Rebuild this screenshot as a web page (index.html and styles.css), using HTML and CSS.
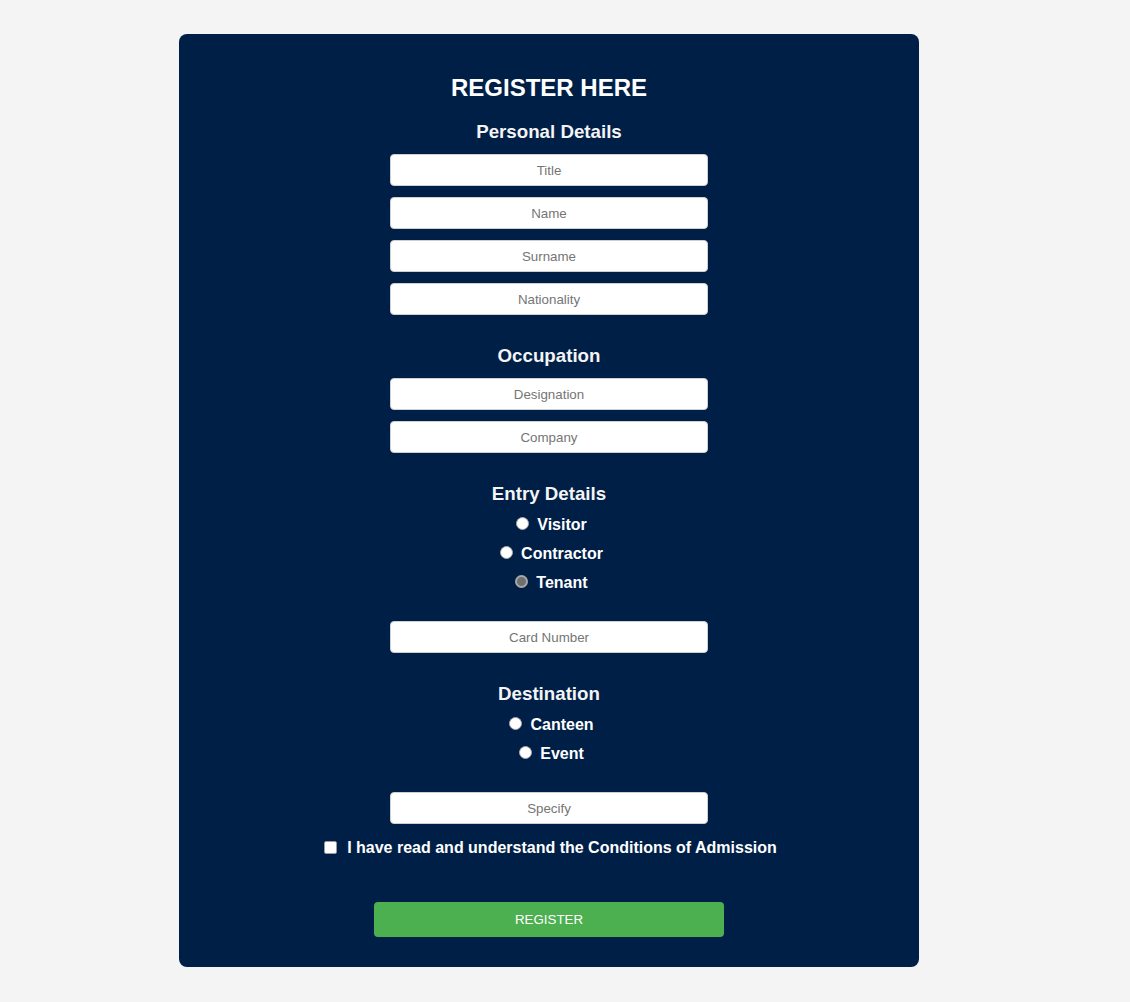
FILE: index.html
```html
<!DOCTYPE html>
<html lang="en">
<head>
<meta charset="utf-8">
<title>Register</title>
<link rel="stylesheet" href="styles.css">
</head>
<body>
<div class="page">
  <form class="card">
    <h1 class="title">REGISTER HERE</h1>

    <h3 class="section first">Personal Details</h3>
    <div class="fields">
      <input class="field" type="text" placeholder="Title">
      <input class="field" type="text" placeholder="Name">
      <input class="field" type="text" placeholder="Surname">
      <input class="field" type="text" placeholder="Nationality">
    </div>

    <h3 class="section">Occupation</h3>
    <div class="fields">
      <input class="field" type="text" placeholder="Designation">
      <input class="field" type="text" placeholder="Company">
    </div>

    <h3 class="section radio-head">Entry Details</h3>
    <div class="radios">
      <label class="radio-row"><input class="radio" type="radio" name="entry"><span class="radio-text">Visitor</span></label>
      <label class="radio-row"><input class="radio" type="radio" name="entry"><span class="radio-text">Contractor</span></label>
      <label class="radio-row"><input class="radio hover" type="radio" name="entry"><span class="radio-text">Tenant</span></label>
    </div>
    <input class="field after-radios" type="text" placeholder="Card Number">

    <h3 class="section radio-head">Destination</h3>
    <div class="radios">
      <label class="radio-row"><input class="radio" type="radio" name="dest"><span class="radio-text">Canteen</span></label>
      <label class="radio-row"><input class="radio" type="radio" name="dest"><span class="radio-text">Event</span></label>
    </div>
    <input class="field after-radios" type="text" placeholder="Specify">

    <label class="agree"><input class="check" type="checkbox"><span class="agree-text">I have read and understand the Conditions of Admission</span></label>

    <button class="submit" type="button">REGISTER</button>
  </form>
</div>
</body>
</html>
```

FILE: styles.css
```css
html, body {
  margin: 0;
  padding: 0;
  background: #f4f4f4;
  font-family: "Liberation Sans", Arial, sans-serif;
}

.page {
  display: flex;
  padding: 34px 0 35px 179px;
}

.card {
  width: 740px;
  box-sizing: border-box;
  background: #001f47;
  border-radius: 8px;
  padding: 40px 0 30px;
  display: flex;
  flex-direction: column;
  align-items: center;
  margin: 0;
}

.title {
  margin: 0;
  font-size: 24px;
  line-height: 28px;
  font-weight: bold;
  color: #ffffff;
}

.section {
  margin: 30px 0 11px;
  font-size: 18.72px;
  line-height: 22px;
  font-weight: bold;
  color: #f4f4f4;
}

.section.first {
  margin-top: 19px;
}

.section.radio-head {
  margin-bottom: 5px;
}

.fields {
  display: flex;
  flex-direction: column;
  gap: 11px;
}

.field {
  display: block;
  width: 318px;
  height: 32px;
  box-sizing: border-box;
  border: 1px solid #cfcfcf;
  border-radius: 4px;
  background: #ffffff;
  text-align: center;
  font-family: "Liberation Sans", Arial, sans-serif;
  font-size: 13.33px;
  color: #222;
  padding: 0 8px;
  margin: 0;
}

.field::placeholder {
  color: #757575;
}

.field.after-radios {
  margin-top: 24px;
}

.radios {
  display: flex;
  flex-direction: column;
  align-items: center;
}

.radio-row {
  display: flex;
  align-items: center;
  justify-content: center;
  height: 29px;
  color: #ffffff;
  font-size: 16px;
  font-weight: bold;
}

.radio {
  appearance: none;
  -webkit-appearance: none;
  width: 13px;
  height: 13px;
  box-sizing: border-box;
  margin: 0 3px 0 5px;
  border: 1px solid #a8a8a8;
  border-radius: 50%;
  background: #ffffff;
  position: relative;
  top: -1px;
}

.radio.hover {
  border: 2px solid #a8a8a8;
  background: #6f6f6f;
}

.radio-text {
  margin-left: 5px;
}

.agree {
  display: flex;
  align-items: center;
  justify-content: center;
  height: 20px;
  margin-top: 14px;
  color: #ffffff;
  font-size: 16px;
  font-weight: bold;
}

.check {
  appearance: none;
  -webkit-appearance: none;
  width: 13px;
  height: 13px;
  box-sizing: border-box;
  margin: 0 3px 0 3px;
  border: 1px solid #9a9a9a;
  border-radius: 2px;
  background: #ffffff;
  position: relative;
  top: -1px;
}

.agree-text {
  margin-left: 7px;
}

.submit {
  margin-top: 44px;
  width: 350px;
  height: 35px;
  border: none;
  border-radius: 4px;
  background: #4caf50;
  color: #ffffff;
  font-family: "Liberation Sans", Arial, sans-serif;
  font-size: 13.33px;
  cursor: pointer;
}
```
